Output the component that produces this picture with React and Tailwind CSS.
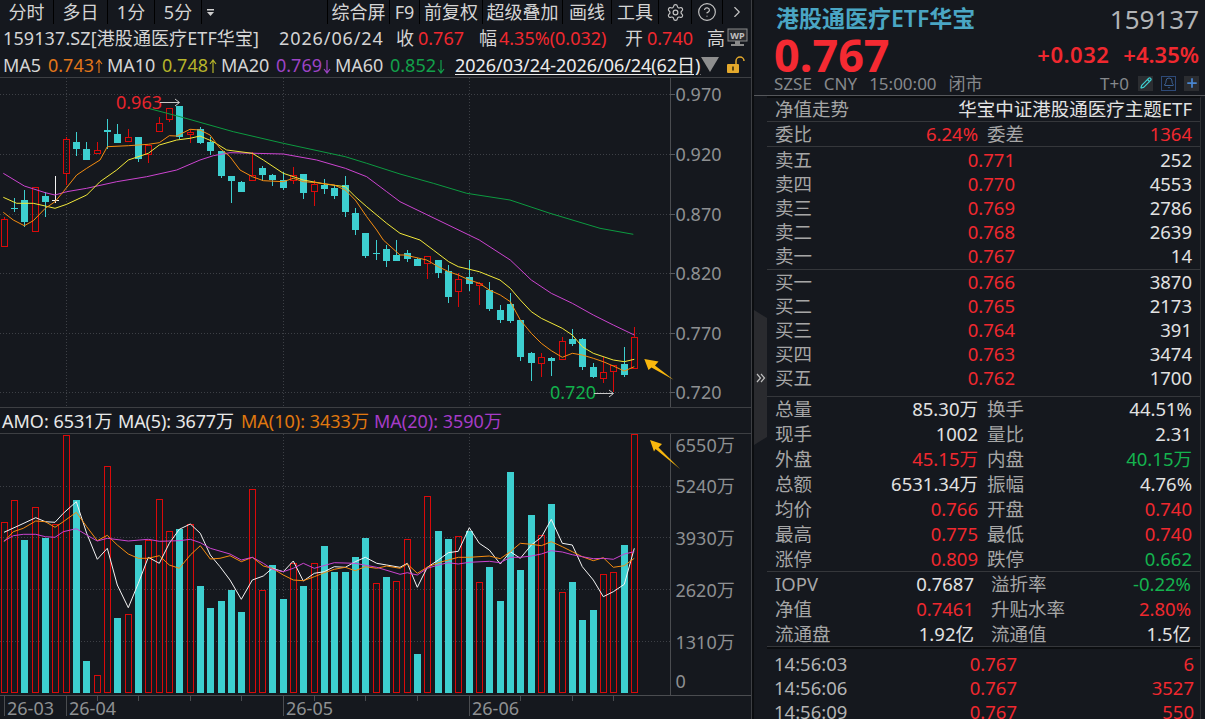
import React from "react";
import { Settings, CircleHelp, ChevronRight, Pencil, Bell, Plus } from "lucide-react";

const cx = (i) => Math.floor(4.33 + 10.333 * i);

// top, bottom, high, low, type
const candles = [
  [219,246,217,246,"r"],[208,209,198,212,"c"],[200,222,190,227,"c"],[187,231,187,231,"r"],[196,202,192,217,"c"],
  [200,201,176,203,"w"],[139,173,137,185,"r"],[142,149,132,156,"c"],[149,160,142,160,"c"],[150,153,142,154,"r"],
  [130,132,119,149,"c"],[134,143,124,143,"c"],[137,141,129,141,"r"],[137,159,137,162,"c"],[145,154,145,163,"r"],
  [123,131,117,131,"r"],[108,119,108,122,"r"],[106,137,106,139,"c"],[132,134,130,143,"r"],[129,143,127,144,"c"],
  [142,151,137,155,"c"],[151,176,151,178,"c"],[176,181,176,203,"c"],[182,192,181,192,"c"],[175,180,152,180,"r"],
  [168,175,166,181,"c"],[175,180,174,186,"c"],[180,188,172,190,"c"],[175,180,167,184,"r"],[174,193,174,199,"c"],
  [184,191,180,206,"r"],[185,189,179,194,"c"],[188,196,185,199,"c"],[185,212,176,217,"c"],[213,230,208,235,"c"],
  [233,256,233,258,"c"],[253,254,240,260,"c"],[249,261,245,267,"c"],[255,261,240,261,"c"],[253,259,250,262,"c"],
  [259,266,258,266,"c"],[256,263,256,279,"r"],[260,273,260,278,"c"],[271,297,265,303,"c"],[279,291,273,307,"r"],
  [277,284,260,291,"c"],[283,285,282,305,"r"],[290,309,282,311,"c"],[310,320,305,323,"c"],[304,321,293,323,"c"],
  [320,357,320,361,"c"],[353,363,352,381,"c"],[357,363,353,377,"r"],[358,361,357,376,"c"],[341,359,337,359,"r"],
  [339,344,329,346,"c"],[339,367,338,370,"c"],[367,377,363,378,"c"],[372,378,357,383,"r"],[365,371,365,392,"r"],
  [364,375,347,377,"c"],[337,368,327,368,"r"],
];

const vols = [
  [522,"r"],[500,"r"],[540,"c"],[507,"r"],[538,"c"],[524,"r"],[435,"r"],[500,"c"],[661,"c"],[675,"r"],
  [466,"r"],[618,"c"],[614,"r"],[545,"c"],[540,"r"],[499,"r"],[531,"r"],[529,"c"],[524,"r"],[586,"c"],
  [608,"c"],[601,"c"],[590,"c"],[612,"c"],[489,"r"],[590,"r"],[565,"c"],[599,"c"],[563,"r"],[586,"c"],
  [563,"r"],[546,"c"],[572,"c"],[572,"c"],[557,"c"],[538,"c"],[583,"r"],[577,"c"],[581,"r"],[539,"r"],
  [654,"c"],[496,"r"],[531,"c"],[539,"c"],[536,"r"],[531,"c"],[582,"r"],[567,"c"],[601,"c"],[472,"c"],
  [570,"c"],[515,"c"],[535,"r"],[504,"c"],[592,"r"],[582,"c"],[620,"c"],[610,"c"],[574,"r"],[572,"r"],
  [545,"c"],[434,"r"],
];

const pts = (a, ox, oy) => {
  let s = "";
  for (let i = 0; i < a.length; i += 2) s += `${(a[i] / 3 + ox).toFixed(1)},${(a[i + 1] / 3 + oy).toFixed(1)} `;
  return s;
};

const ma5 = pts([10,637,40,660,73,677,100,662,136,625,165,605,190,575,230,525,260,505,300,480,322,440,385,437,445,433,478,428,508,407,530,408,570,388,600,390,630,405,660,445,690,470,720,510,757,530,790,542,850,545,880,535,910,545,950,548,1003,555,1036,570,1066,600,1100,650,1130,690,1150,720],0,0)
  + pts([1200,45],0,240) + pts([15,45,80,60,115,80,146,95,175,105,208,120,238,130,268,150,301,165,331,185,361,240,394,280,424,310,454,332,487,352,517,340,547,345,580,355,610,365,640,378,673,393,703,380],400,240);
const ma10 = pts([10,592,50,610,100,610,136,618,165,625,200,613,260,585,300,545,350,510,385,480,445,460,478,435,530,420,570,415,600,408,640,425,680,450,757,460,790,480,850,520,910,540,980,553,1036,560,1066,590,1100,620,1160,670,1200,700],0,0)
  + pts([60,0,100,30,146,65,175,80,238,95,300,120,331,145,361,180,394,215,424,235,487,265,517,285,547,320,580,340,640,360,673,365,703,358],400,240);
const ma20 = pts([10,520,73,558,136,578,165,585,200,575,260,565,350,545,440,530,530,510,600,480,640,467,690,458,850,462,950,480,1036,505,1100,530,1160,575,1200,605],0,0)
  + pts([238,0,331,60,394,120,454,160,517,190,580,225,640,255,703,285],400,240);
const ma60 = pts([445,325,540,350,700,395,850,430,1036,470,1100,490,1200,522],0,0)
  + pts([100,550,200,580,330,600,450,640,600,685,700,703],400,0);

const vWhite = pts([12,157,60,135,107,113,136,125,165,127,190,100,229,65,260,160,292,238,322,205,352,315,385,383,415,310,445,232,478,250,508,190,538,148,571,132,601,160,631,225,660,260,690,300,724,358,757,300,790,288,817,265,850,275,880,243,910,303,943,280,973,275,1003,260,1036,262,1066,245,1096,232,1130,250,1160,255,1200,262],0,480)
  + pts([22,250,52,322,82,262,115,240,145,218,175,214,208,143,238,190,268,210,301,252,331,215,361,235,394,195,424,172,454,118,487,190,517,195,547,260,580,300,610,350,640,335,673,313,703,205],400,480);
const vOrange = pts([12,185,40,155,70,145,107,123,136,125,165,142,190,125,229,97,260,140,292,182,322,166,352,195,385,222,415,235,445,235,478,227,508,255,538,265,571,225,601,197,631,237,660,235,690,227,724,245,757,232,790,258,817,265,850,285,880,300,910,302,943,290,973,278,1003,268,1036,262,1066,272,1096,260,1130,265,1160,258,1200,265],0,480)
  + pts([22,252,52,280,82,262,115,248,145,240,175,232,208,232,268,228,301,236,331,215,361,190,394,193,424,197,454,185,487,200,517,215,547,230,580,242,610,233,640,262,673,257,703,235],400,480);
const vMag = pts([12,183,40,167,70,163,107,163,136,170,165,172,190,155,229,146,260,165,292,183,322,175,385,183,445,178,478,184,538,182,571,178,601,188,631,205,690,222,724,240,757,232,790,250,817,268,850,275,880,265,910,250,943,265,1003,248,1066,250,1130,262,1200,283],0,480)
  + pts([22,278,52,285,82,265,115,255,145,248,175,252,208,247,268,244,301,248,331,232,361,232,394,228,424,222,454,212,487,216,517,224,547,230,580,236,610,235,640,238,673,222,703,215],400,480);

const CYAN = "#3dcfd0";
const RED = "#d90a0a";
const GRID = "#3d4046";

function Candle({ c, i }) {
  const [t, b, h, l, k] = c;
  const x = cx(i);
  if (k === "c" || k === "w") {
    const col = k === "c" ? CYAN : "#f2f2f2";
    return (
      <g>
        <line x1={x + 0.5} x2={x + 0.5} y1={h} y2={l} stroke={col} />
        <rect x={x - 3} y={t} width="7" height={Math.max(1, b - t)} fill={col} />
      </g>
    );
  }
  return (
    <g>
      {h < t && <line x1={x + 0.5} x2={x + 0.5} y1={h} y2={t} stroke={RED} />}
      {l > b && <line x1={x + 0.5} x2={x + 0.5} y1={b} y2={l} stroke={RED} />}
      <rect x={x - 2.5} y={t + 0.5} width="6" height={b - t} fill="none" stroke={RED} />
    </g>
  );
}

function Tab({ w, children, border = true }) {
  return (
    <div className={`flex items-center justify-center h-full shrink-0 ${w} ${border ? "border-r border-[#000000]" : ""}`}>
      {children}
    </div>
  );
}

function Arrow({ up, color }) {
  return (
    <svg className="inline-block align-[-2px] ml-[1px]" width="8" height="15" viewBox="0 0 8 15">
      {up ? (
        <path d="M4 14V1M1 5l3-4 3 4" fill="none" stroke={color} strokeWidth="1.2" />
      ) : (
        <path d="M4 1v13M1 10l3 4 3-4" fill="none" stroke={color} strokeWidth="1.2" />
      )}
    </svg>
  );
}

function MainChart() {
  return (
    <svg className="block w-[751px] h-[329px] shrink-0" viewBox="0 78 751 329">
      {[94, 154, 214, 273, 333, 392].map((y) => (
        <line key={y} x1="0" x2="670" y1={y + 0.5} y2={y + 0.5} stroke={GRID} strokeDasharray="1 2" />
      ))}
      {[66, 283, 469].map((x) => (
        <line key={x} x1={x + 0.5} x2={x + 0.5} y1="78" y2="407" stroke={GRID} strokeDasharray="1 2" />
      ))}
      <line x1="670.5" x2="670.5" y1="78" y2="407" stroke="#4a4c50" />
      {[[94, "0.970"], [154, "0.920"], [214, "0.870"], [273, "0.820"], [333, "0.770"], [392, "0.720"]].map(([y, t]) => (
        <g key={t}>
          <line x1="670" x2="675" y1={y + 0.5} y2={y + 0.5} stroke="#5a5c60" />
          <text x="675.5" y={y + 7} fontSize="18" fill="#8e9092">{t}</text>
        </g>
      ))}
      {candles.map((c, i) => <Candle key={i} c={c} i={i} />)}
      <polyline points={ma60} fill="none" stroke="#0c9a40" />
      <polyline points={ma20} fill="none" stroke="#cc44d0" />
      <polyline points={ma10} fill="none" stroke="#f2e83a" />
      <polyline points={ma5} fill="none" stroke="#f58c10" />
      <text x="116" y="109" fontSize="18" fill="#e8242c">0.963</text>
      <path d="M160 102.5H179M175 99l4.5 3.5-4.5 3.5" fill="none" stroke="#c8c8c8" />
      <text x="550" y="399" fontSize="18" fill="#12b04c">0.720</text>
      <path d="M594 393.5H613M609 390l4.5 3.5-4.5 3.5" fill="none" stroke="#c8c8c8" />
      <polygon points="644.3,359 658.5,361.5 655,365.5 673.5,379.7 651.5,367.5 648.5,370" fill="#f8b70d" />
    </svg>
  );
}

function VolChart() {
  return (
    <svg className="block w-[751px] h-[285px] shrink-0" viewBox="0 434 751 285">
      {[486, 537, 589, 641].map((y) => (
        <line key={y} x1="0" x2="670" y1={y + 0.5} y2={y + 0.5} stroke={GRID} strokeDasharray="1 2" />
      ))}
      {[283, 469].map((x) => (
        <line key={x} x1={x + 0.5} x2={x + 0.5} y1="434" y2="695" stroke={GRID} strokeDasharray="1 2" />
      ))}
      <line x1="670.5" x2="670.5" y1="434" y2="695" stroke="#4a4c50" />
      {vols.map(([t, k], i) =>
        k === "c" ? (
          <rect key={i} x={cx(i) - 3} y={t} width="7" height={693 - t} fill={CYAN} />
        ) : (
          <rect key={i} x={cx(i) - 2.5} y={t + 0.5} width="6" height={692 - t} fill="none" stroke={RED} />
        )
      )}
      <polyline points={vWhite} fill="none" stroke="#f4f4f4" />
      <polyline points={vOrange} fill="none" stroke="#f58c10" />
      <polyline points={vMag} fill="none" stroke="#cc44d0" />
      {[[452, "6550万"], [493, "5240万"], [545, "3930万"], [597, "2620万"], [649, "1310万"], [688, "0"]].map(([y, t]) => (
        <text key={t} x="675.5" y={y} fontSize="18" fill="#8e9092">{t}</text>
      ))}
      <line x1="0" x2="751" y1="695.5" y2="695.5" stroke="#4a4c50" />
      {[4, 66, 283, 469].map((x) => (
        <line key={x} x1={x + 0.5} x2={x + 0.5} y1="696" y2="716" stroke="#4a4c50" />
      ))}
      {[97, 138, 190, 241, 314, 365, 417, 520, 572, 613].map((x) => (
        <line key={x} x1={x + 0.5} x2={x + 0.5} y1="696" y2="701" stroke="#4a4c50" />
      ))}
      {[[7, "26-03"], [69, "26-04"], [286, "26-05"], [472, "26-06"]].map(([x, t]) => (
        <text key={t} x={x} y="715" fontSize="18" fill="#8e9092">{t}</text>
      ))}
      <polygon points="650,440 662,444 658.5,447.5 680,469 655.5,449 654,451.5" fill="#f8b70d" />
    </svg>
  );
}

const R = "text-[#f0282f]";
const G = "text-[#14b34e]";
const W = "text-[#e2e2e2]";

function Pair({ a, b, c, d, bc = W, dc = W }) {
  return (
    <div className="grid grid-cols-[203px_205px] gap-x-[9px] h-[25px] px-2 items-center">
      <div className="flex justify-between">
        <span className="text-[#a6a6a6]">{a}</span>
        <span className={bc}>{b}</span>
      </div>
      <div className="flex justify-between">
        <span className="text-[#a6a6a6]">{c}</span>
        <span className={dc}>{d}</span>
      </div>
    </div>
  );
}

function Nav({ a, b, c, d, bc = W, dc = W }) {
  return (
    <div className="grid grid-cols-[199px_200px] gap-x-[17px] h-[25px] px-2 items-center">
      <div className="flex justify-between">
        <span className="text-[#a6a6a6]">{a}</span>
        <span className={bc}>{b}</span>
      </div>
      <div className="flex justify-between">
        <span className="text-[#a6a6a6]">{c}</span>
        <span className={dc}>{d}</span>
      </div>
    </div>
  );
}

function Book({ a, p, q }) {
  return (
    <div className="grid grid-cols-[240px_177px] h-6 px-2 items-center">
      <div className="flex justify-between">
        <span className="text-[#a6a6a6]">{a}</span>
        <span className={R}>{p}</span>
      </div>
      <span className={`text-right ${W}`}>{q}</span>
    </div>
  );
}

function Tick({ t, p, q }) {
  return (
    <div className="grid grid-cols-[243px_177px] h-6 pl-[7px] items-center">
      <div className="flex justify-between">
        <span className="text-[#b4b4b4]">{t}</span>
        <span className={R}>{p}</span>
      </div>
      <span className={`text-right ${R}`}>{q}</span>
    </div>
  );
}

export default function App() {
  return (
    <div className="relative flex w-[1205px] h-[719px] overflow-hidden bg-[#15181e] text-[18px] leading-none font-['Noto_Sans','Noto_Sans_CJK_SC',sans-serif]">
      {/* left */}
      <div className="w-[752px] shrink-0 flex flex-col border-r border-[#3d3f43]">
        <div className="flex h-6 items-center text-[#d4d4d4] text-[18px] shrink-0">
          <Tab w="w-[54px]">分时</Tab>
          <Tab w="w-[54px]">多日</Tab>
          <Tab w="w-[47px]">1分</Tab>
          <Tab w="w-[47px]">5分</Tab>
          <div className="flex items-center h-full w-4 pl-[5px]">
            <svg width="7" height="7" viewBox="0 0 7 7"><path d="M0 0h7v1.5H0zM0 3h7L3.5 7z" fill="#cfcfcf" /></svg>
          </div>
          <div className="flex-1 h-full border-r border-[#000000]" />
          <Tab w="w-[62px]">综合屏</Tab>
          <Tab w="w-[30px]">F9</Tab>
          <Tab w="w-[63px]">前复权</Tab>
          <Tab w="w-[80px]">超级叠加</Tab>
          <Tab w="w-[49px]">画线</Tab>
          <Tab w="w-[47px]">工具</Tab>
          <Tab w="w-[33px]"><Settings size={19} strokeWidth={1.5} color="#c4c4c4" /></Tab>
          <Tab w="w-[31px]"><CircleHelp size={20} strokeWidth={1.4} color="#c4c4c4" /></Tab>
          <Tab w="w-[28px]" border={false}><ChevronRight size={18} strokeWidth={1.5} color="#c4c4c4" /></Tab>
        </div>
        <div className="relative flex h-[28px] items-center pl-[3px] whitespace-nowrap text-[#d4d4d4] shrink-0">
          <span className="w-[276px] tracking-[0.1px]">159137.SZ[港股通医疗ETF华宝]</span>
          <span className="w-[117px] tracking-[0.9px]">2026/06/24</span>
          <span className="w-[22px]">收</span>
          <span className={`w-[61px] ${R}`}>0.767</span>
          <span className="w-[20px]">幅</span>
          <span className={`w-[126px] ${R}`}>4.35%(0.032)</span>
          <span className="w-[22px]">开</span>
          <span className={`w-[60px] ${R}`}>0.740</span>
          <span>高</span>
          <svg className="absolute left-[727px] top-[4px]" width="21" height="19" viewBox="0 0 21 19">
            <rect x="1" y="1" width="19" height="12" fill="#2a2c30" stroke="#8a8a8a" />
            <text x="10.5" y="10.5" textAnchor="middle" fontSize="9" fontWeight="700" fill="#c0c0c0">WP</text>
            <rect x="8" y="13" width="5" height="3" fill="#8a8a8a" />
            <rect x="4" y="16" width="13" height="2" fill="#8a8a8a" />
          </svg>
        </div>
        <div className="flex h-[25px] items-center pl-[3px] whitespace-nowrap text-[#d4d4d4] shrink-0 border-b border-[#3d3f43] box-content">
          <span className="w-[45px]">MA5</span>
          <span className="w-[59px] text-[#e2761a]">0.743<Arrow up color="#e2761a" /></span>
          <span className="w-[55px]">MA10</span>
          <span className="w-[59px] text-[#b5b42a]">0.748<Arrow up color="#b5b42a" /></span>
          <span className="w-[55px]">MA20</span>
          <span className="w-[59px] text-[#9d44c4]">0.769<Arrow color="#9d44c4" /></span>
          <span className="w-[55px]">MA60</span>
          <span className="w-[65px] text-[#12a04a]">0.852<Arrow color="#12a04a" /></span>
          <span className="w-[245px] text-[#ececec] underline underline-offset-2 tracking-[-0.05px]">2026/03/24-2026/06/24(62日)</span>
          <svg className="ml-[1px]" width="18" height="15" viewBox="0 0 18 15"><path d="M0 0h18L9 15z" fill="#8e8e8e" /></svg>
          <svg className="ml-[7px]" width="20" height="18" viewBox="0 0 20 18">
            <path d="M10 9V5a4 4 0 0 1 8 0" fill="none" stroke="#e4a92c" strokeWidth="1.5" />
            <rect x="1" y="8" width="12" height="9" rx="1" fill="#e4a92c" />
            <rect x="6" y="10.5" width="2" height="4" fill="#5a4410" />
          </svg>
        </div>
        <MainChart />
        <div className="flex h-[27px] items-center pl-[2px] whitespace-nowrap border-y border-[#3d3f43] shrink-0 box-border">
          <span className="w-[116px] text-[#e8e8e8]">AMO: 6531万</span>
          <span className="w-[123px] text-[#e8e8e8] tracking-[-0.15px]">MA(5): 3677万</span>
          <span className="w-[133px] text-[#e0780f]">MA(10): 3433万</span>
          <span className="text-[#a63cc8]">MA(20): 3590万</span>
        </div>
        <VolChart />
      </div>

      {/* right */}
      <div className="flex-1 min-w-0 flex flex-col border-l-2 border-[#0b0d10] whitespace-nowrap">
        <div className="h-[96px] shrink-0 pl-[22px] pr-[6px] border-b border-[#55575b]">
          <div className="flex h-[37px] items-center justify-between">
            <span className="text-[23px] font-semibold text-[#4aa6c4]">港股通医疗ETF华宝</span>
            <span className="text-[26px] text-[#b2b4b6]">159137</span>
          </div>
          <div className="flex h-[34px] items-center justify-between -ml-[2px]">
            <span className="text-[45px] font-bold text-[#f52a32]">0.767</span>
            <span className="flex gap-[14px] text-[22px] font-semibold text-[#f0282f]">
              <span className="tracking-[0.5px]">+0.032</span>
              <span>+4.35%</span>
            </span>
          </div>
          <div className="flex h-6 items-center justify-between text-[17px] text-[#85888c] -ml-[2px]">
            <span className="flex gap-[12px]">
              <span>SZSE</span><span>CNY</span><span>15:00:00</span><span>闭市</span>
            </span>
            <span className="flex items-center gap-[8px]">
              <span className="mr-[1px]">T+0</span>
              <span className="w-[15px] h-[15px] bg-[#2b2d31] flex items-center justify-center"><Pencil size={12} strokeWidth={2.5} color="#3dcfd0" /></span>
              <span className="w-[15px] h-[15px] border border-[#2e4a78] flex items-center justify-center"><Bell size={12} strokeWidth={1.5} color="#4a78b8" /></span>
              <span className="w-[15px] h-[15px] bg-[#2b2d31] flex items-center justify-center"><Plus size={14} strokeWidth={3} color="#4a86d0" /></span>
            </span>
          </div>
        </div>

        <div className="ml-[13px] w-[434px] flex-1 border-r border-[#2e3034] border-t-2 border-t-[#0b0d10] text-[18.5px]">
          <div className="flex h-6 items-center justify-between px-2 border-b border-[#35373b]">
            <span className="text-[#a6a6a6]">净值走势</span>
            <span className="text-[#e2e2e2]">华宝中证港股通医疗主题ETF</span>
          </div>
          <div className="border-b border-[#35373b] h-[25px]">
            <Pair a="委比" b="6.24%" c="委差" d="1364" bc={R} dc={R} />
          </div>
          <div className="border-b border-[#35373b] py-[1px]">
            <Book a="卖五" p="0.771" q="252" />
            <Book a="卖四" p="0.770" q="4553" />
            <Book a="卖三" p="0.769" q="2786" />
            <Book a="卖二" p="0.768" q="2639" />
            <Book a="卖一" p="0.767" q="14" />
          </div>
          <div className="border-b border-[#35373b] h-[127px]">
            <Book a="买一" p="0.766" q="3870" />
            <Book a="买二" p="0.765" q="2173" />
            <Book a="买三" p="0.764" q="391" />
            <Book a="买四" p="0.763" q="3474" />
            <Book a="买五" p="0.762" q="1700" />
          </div>
          <div className="border-b border-[#35373b] h-[175px]">
            <Pair a="总量" b="85.30万" c="换手" d="44.51%" />
            <Pair a="现手" b="1002" c="量比" d="2.31" />
            <Pair a="外盘" b="45.15万" c="内盘" d="40.15万" bc={R} dc={G} />
            <Pair a="总额" b="6531.34万" c="振幅" d="4.76%" />
            <Pair a="均价" b="0.766" c="开盘" d="0.740" bc={R} dc={R} />
            <Pair a="最高" b="0.775" c="最低" d="0.740" bc={R} dc={R} />
            <Pair a="涨停" b="0.809" c="跌停" d="0.662" bc={R} dc={G} />
          </div>
          <div className="border-b border-[#35373b] h-[75px]">
            <Nav a="IOPV" b="0.7687" c="溢折率" d="-0.22%" dc={G} />
            <Nav a="净值" b="0.7461" c="升贴水率" d="2.80%" bc={R} dc={R} />
            <Nav a="流通盘" b="1.92亿" c="流通值" d="1.5亿" />
          </div>
          <div className="border-t-2 border-[#0b0d10] pt-[3px]">
            <Tick t="14:56:03" p="0.767" q="6" />
            <Tick t="14:56:06" p="0.767" q="3527" />
            <Tick t="14:56:09" p="0.767" q="550" />
          </div>
        </div>
      </div>

      {/* collapse handle */}
      <svg className="absolute left-[754px] top-[310px]" width="14" height="135" viewBox="0 0 14 135">
        <polygon points="0,0 13,8 13,127 0,135" fill="#2a2b2f" />
        <path d="M3 64l3.5 4-3.5 4M7 64l3.5 4-3.5 4" fill="none" stroke="#c0c0c0" strokeWidth="1.2" />
      </svg>
    </div>
  );
}
